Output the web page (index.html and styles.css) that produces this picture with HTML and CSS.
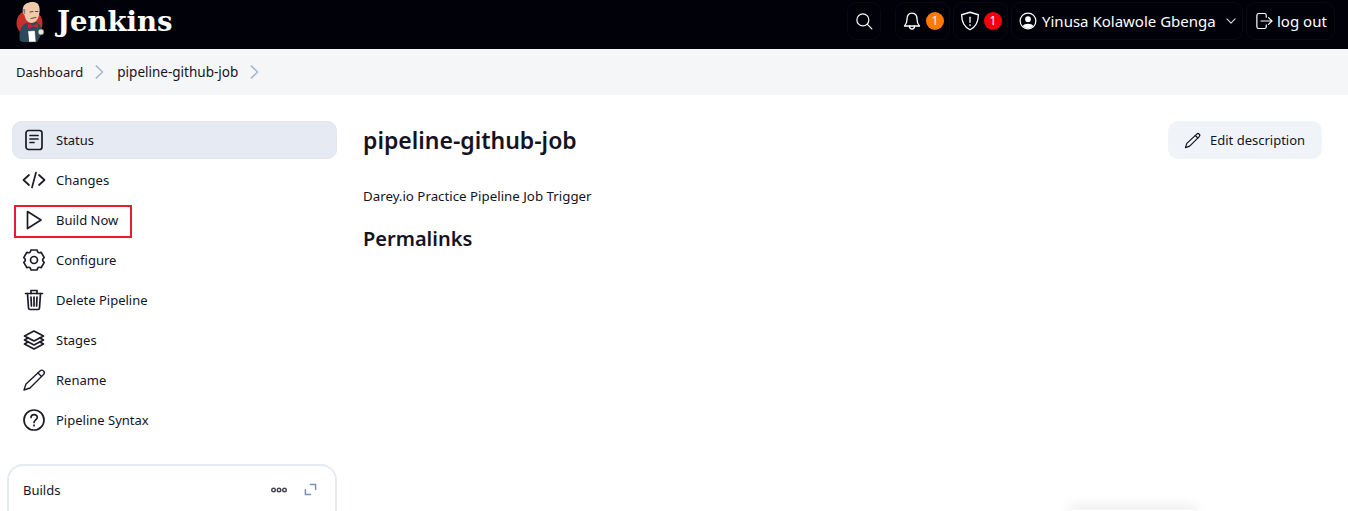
FILE: index.html
```html
<!DOCTYPE html>
<html>
<head>
    <meta charset="utf-8">
    <title>pipeline-github-job - Jenkins</title>
    <link rel="stylesheet" href="styles.css">
</head>

<body>
<header class="top-bar">
    <a href="#" class="brand">
        <svg class="brand-logo" viewBox="0 0 32 42" width="32" height="42">
            <circle cx="14.500" cy="22" r="13" fill="#c9302c"/>
            <path d="M5 40 C3.500 33 5 25 11 22 L22 21 C26 24 27 28 27 32 L22 41 L8 41 Z" fill="#2b4a5e"/>
            <path d="M8 7 C8.500 1.500 19 -1 23 3 C25 6 25 10 24 14 C23 19 20 22 16 22 C12 21 10 18 9.500 14 C8 13 7 10 8 7 Z" fill="#eec9ab"/>
            <path d="M8 8 C8 9 8.500 12 9.500 13.500 C10.500 12 10.500 10 10 8 Z" fill="#8a8078"/>
            <path d="M15 11 L18 10.500 M20.500 10.500 L23 10.500 M16 17.500 L21 16.500" stroke="#6b4436" stroke-width="1" fill="none"/>
            <path d="M13 22 L18 24.500 L23 22 L23 27 L18 25.500 L13 28 Z" fill="#d32027"/>
            <path d="M13 30 L20 29.500 L21 41 L14 41 Z" fill="#fff" stroke="#333" stroke-width=".5"/>
            <circle cx="26" cy="31" r="3" fill="#e8e4dc" stroke="#444" stroke-width=".6"/>
        </svg>
        <span class="brand-name">Jenkins</span>
    </a>
    <nav class="top-actions">
        <a href="#" class="top-btn search-btn">
            <svg class="ico-18" viewBox="0 0 24 24"><circle cx="10.500" cy="10.500" r="8"/><path d="M16.500 16.500 L22.500 22.500"/></svg>
        </a>
        <a href="#" class="top-btn alert-btn">
            <svg class="ico-20" viewBox="0 0 24 24"><path d="M12 2.500 C7.500 2.500 6 6 6 10 C6 14 5 16 3 18 L21 18 C19 16 18 14 18 10 C18 6 16.500 2.500 12 2.500 Z"/><path d="M9 18 C9 23 15 23 15 18"/></svg>
            <span class="badge badge-orange">1</span>
        </a>
        <a href="#" class="top-btn alert-btn">
            <svg class="ico-20" viewBox="0 0 24 24"><path d="M12 1.500 L22 4.500 C22 13 19.500 19 12 22.500 C4.500 19 2 13 2 4.500 Z"/><path d="M12 7.500 L12 13.500"/><path d="M12 16.500 L12 17.500"/></svg>
            <span class="badge badge-red">1</span>
        </a>
        <a href="#" class="top-btn user-btn">
            <svg class="ico-18" viewBox="0 0 24 24"><circle cx="12" cy="12" r="10.500"/><circle cx="12" cy="9.500" r="3.800" class="solid"/><path d="M5 18.500 C7 14.500 17 14.500 19 18.500 C16 22.500 8 22.500 5 18.500 Z" class="solid"/></svg>
            <span>Yinusa Kolawole Gbenga</span>
            <svg class="chevron" viewBox="0 0 24 24"><path d="M5 8.500 L12 15.500 L19 8.500"/></svg>
        </a>
        <a href="#" class="top-btn logout-btn">
            <svg class="ico-18" viewBox="0 0 24 24"><path d="M15 7 L15 4.500 C15 3 14 2 12.500 2 L5 2 C3.500 2 2.500 3 2.500 4.500 L2.500 19.500 C2.500 21 3.500 22 5 22 L12.500 22 C14 22 15 21 15 19.500 L15 17"/><path d="M8 12 L22.500 12"/><path d="M18 7.500 L22.500 12 L18 16.500"/></svg>
            <span>log out</span>
        </a>
    </nav>
</header>

<div class="breadcrumbs">
    <a href="#">Dashboard</a>
    <svg class="crumb-sep" viewBox="0 0 24 24"><path d="M5.500 1.500 L16.500 12 L5.500 22.500"/></svg>
    <a href="#" class="crumb-job">pipeline-github-job</a>
    <svg class="crumb-sep" viewBox="0 0 24 24"><path d="M5.500 1.500 L16.500 12 L5.500 22.500"/></svg>
</div>

<div class="page">
    <aside class="side-panel">
        <ul class="tasks">
            <li class="task active">
                <svg class="ico-24" viewBox="0 0 24 24"><rect x="4" y="2.500" width="16" height="19" rx="2.500"/><path d="M8 7.500 L16 7.500 M8 11 L16 11 M8 14.500 L12 14.500"/></svg>
                <span>Status</span>
            </li>
            <li class="task">
                <svg class="ico-24" viewBox="0 0 24 24"><path d="M7 7 L1.500 12 L7 17"/><path d="M17 7 L22.500 12 L17 17"/><path d="M14 4.500 L10 19.500"/></svg>
                <span>Changes</span>
            </li>
            <li class="task marked">
                <svg class="ico-24" viewBox="0 0 24 24"><path d="M5.500 3.500 L19 12 L5.500 20.500 Z"/></svg>
                <span>Build Now</span>
            </li>
            <li class="task">
                <svg class="ico-24" viewBox="0 0 24 24"><circle cx="12" cy="12" r="3.500"/><path d="M8.900 2 L15.100 2 Q15.500 5.900 19.200 4.300 L22.200 9.600 Q19 12 22.200 14.400 L19.200 19.700 Q15.500 18.100 15.100 22 L8.900 22 Q8.500 18.100 4.800 19.700 L1.800 14.400 Q5 12 1.800 9.600 L4.800 4.300 Q8.500 5.900 8.900 2 Z"/></svg>
                <span>Configure</span>
            </li>
            <li class="task">
                <svg class="ico-24" viewBox="0 0 24 24"><path d="M3.500 5.500 L20.500 5.500"/><path d="M9 5.500 L9 2.500 L15 2.500 L15 5.500"/><path d="M5.500 5.500 L6.500 20 C6.600 21 7.200 21.500 8 21.500 L16 21.500 C16.800 21.500 17.400 21 17.500 20 L18.500 5.500"/><path d="M9 9 L9.400 18 M12 9 L12 18 M15 9 L14.600 18"/></svg>
                <span>Delete Pipeline</span>
            </li>
            <li class="task">
                <svg class="ico-24" viewBox="0 0 24 24"><path d="M12 3 L21.500 8 L12 13 L2.500 8 Z"/><path d="M6 10 L2.500 12 L12 17 L21.500 12 L18 10"/><path d="M6 14 L2.500 16 L12 21 L21.500 16 L18 14"/></svg>
                <span>Stages</span>
            </li>
            <li class="task">
                <svg class="ico-24 thin" viewBox="0 0 24 24"><path d="M18 3 C19 2 20.500 2 21.500 3 C22.500 4 22.500 5.500 21.500 6.500 L8 20 L2 22 L4 16 Z"/><path d="M16 5 L19.500 8.500"/></svg>
                <span>Rename</span>
            </li>
            <li class="task">
                <svg class="ico-24" viewBox="0 0 24 24"><circle cx="12" cy="12" r="10"/><path d="M9 9.500 C9 5.500 15.500 5.800 15.300 9.500 C15.200 11.800 12 12 12 14.500"/><path d="M12 17.200 L12 17.800"/></svg>
                <span>Pipeline Syntax</span>
            </li>
        </ul>

        <section class="builds-card">
            <h2>Builds</h2>
            <svg class="more-ico" viewBox="0 0 16 6" width="16" height="6"><circle cx="2.500" cy="3" r="1.800"/><circle cx="8" cy="3" r="1.800"/><circle cx="13.500" cy="3" r="1.800"/></svg>
            <svg class="expand-ico" viewBox="0 0 14 14" width="13" height="13"><path d="M7 1.500 L12.500 1.500 L12.500 7"/><path d="M7 12.500 L1.500 12.500 L1.500 7"/></svg>
        </section>
    </aside>

    <main class="content">
        <div class="job-head">
            <h1>pipeline-github-job</h1>
            <a href="#" class="edit-btn">
                <svg viewBox="0 0 24 24" width="17" height="17"><path d="M18 3 C19 2 20.500 2 21.500 3 C22.500 4 22.500 5.500 21.500 6.500 L8 20 L2 22 L4 16 Z"/><path d="M16 5 L19.500 8.500"/></svg>
                <span>Edit description</span>
            </a>
        </div>
        <p class="job-desc">Darey.io Practice Pipeline Job Trigger</p>
        <h2 class="permalinks">Permalinks</h2>
    </main>
</div>

<div class="bottom-shadow"></div>
</body>
</html>
```

FILE: styles.css
```css
*, *::after {
    box-sizing: border-box;
    margin: 0;
    padding: 0;
}

html, body {
    height: 100%;
    overflow: hidden;
}

body {
    font-family: "Noto Sans", "Open Sans", sans-serif;
    font-size: 13px;
    color: #14141f;
    background: #fff;
    position: relative;
}

a {
    color: inherit;
    text-decoration: none;
}

svg {
    fill: none;
    stroke: currentColor;
    stroke-linecap: round;
    stroke-linejoin: round;
    flex-shrink: 0;
}

/* top bar */
.top-bar {
    height: 49px;
    background: #01010a;
    display: flex;
    justify-content: space-between;
    align-items: flex-start;
    padding: 2px 13px 0 15px;
    color: #fff;
}

.brand {
    display: flex;
    align-items: center;
    gap: 10px;
    height: 38px;
}

.brand-logo {
    stroke: none;
    margin-top: 1px;
}

.brand-name {
    font-family: "DejaVu Serif", "Liberation Serif", serif;
    font-size: 27.500px;
    font-weight: 700;
}

.top-actions {
    display: flex;
    gap: 3px;
    font-size: 15px;
}

.top-btn {
    display: flex;
    align-items: center;
    height: 38px;
    border-radius: 10px;
    border: 1px solid #0a0a15;
}

.search-btn {
    width: 34px;
    justify-content: center;
    margin-right: 11px;
}

.alert-btn {
    width: 55px;
    padding-left: 6px;
    gap: 4px;
}

.user-btn {
    width: 232px;
    padding-left: 7px;
    gap: 5px;
}

.logout-btn {
    width: 89px;
    padding-left: 8px;
    gap: 4px;
}

.ico-18 {
    width: 18px;
    height: 18px;
    stroke-width: 1.6;
}

.ico-20 {
    width: 20px;
    height: 20px;
    stroke-width: 1.6;
}

.ico-18 .solid {
    fill: #fff;
    stroke: none;
}

.chevron {
    width: 14px;
    height: 14px;
    stroke-width: 2;
    margin-left: 3px;
    color: #d8d8dc;
}

.badge {
    width: 18px;
    height: 18px;
    border-radius: 50%;
    font-size: 12px;
    line-height: 18px;
    text-align: center;
}

.badge-orange { background: #fe7a05; }
.badge-red { background: #f5000f; }

/* breadcrumbs */
.breadcrumbs {
    height: 46px;
    background: #f5f6f8;
    display: flex;
    align-items: center;
    padding-left: 16px;
    gap: 10px;
}

.crumb-job {
    font-size: 13.500px;
}

.crumb-sep {
    width: 14px;
    height: 14px;
    stroke-width: 2.400;
    color: #a3b4cf;
}

/* page */
.page {
    display: flex;
    height: 416px;
    overflow: hidden;
}

.side-panel {
    width: 337px;
    flex-shrink: 0;
    padding-top: 26px;
}

.tasks {
    list-style: none;
    margin-left: 12px;
}

.task {
    position: relative;
    height: 38px;
    margin-bottom: 2px;
    display: flex;
    align-items: center;
    gap: 10px;
    padding-left: 10px;
    border-radius: 10px;
}

.task.active {
    background: #e6eaf2;
    box-shadow: inset 0 0 0 1px #e2e6ef;
}

/* red box drawn over the screenshot */
.task.marked::after {
    content: "";
    position: absolute;
    left: 2px;
    top: 4px;
    width: 118px;
    height: 33px;
    border: 2px solid #e81c2c;
}

.ico-24 {
    width: 24px;
    height: 24px;
    stroke-width: 1.700;
    color: #1c1c28;
}

.ico-24.thin {
    stroke-width: 1.400;
}

.builds-card {
    margin: 25px 0 0 7px;
    height: 80px;
    border: 2px solid #e6eaf2;
    border-radius: 16px;
    display: flex;
    align-items: flex-start;
    padding: 14px 18px 0 14px;
}

.builds-card h2 {
    font-size: 13px;
    font-weight: 400;
    line-height: 20px;
    flex: 1;
}

.more-ico {
    stroke-width: 1.4;
    margin: 7px 17px 0 0;
    color: #44444f;
}

.expand-ico {
    stroke-width: 1.6;
    margin-top: 3px;
    color: #7a8fb5;
}

.content {
    flex: 1;
    padding: 26px 26px 0 26px;
}

.job-head {
    display: flex;
    justify-content: space-between;
    align-items: center;
    height: 38px;
}

h1 {
    font-size: 23px;
    font-weight: 600;
}

.edit-btn {
    width: 154px;
    height: 38px;
    display: flex;
    align-items: center;
    gap: 9px;
    padding-left: 16px;
    background: #f0f3f7;
    border-radius: 10px;
}

.edit-btn svg {
    stroke-width: 1.700;
}

.job-desc {
    margin-top: 27px;
    line-height: 20px;
    font-size: 13.300px;
}

.permalinks {
    margin-top: 20px;
    font-size: 20px;
    font-weight: 600;
    line-height: 26px;
}

/* shadow of a floating bar just below the fold */
.bottom-shadow {
    position: absolute;
    left: 1072px;
    width: 121px;
    top: 510px;
    height: 1px;
    box-shadow: 0 0 14px 3px rgba(0, 0, 0, 0.12);
}
```
